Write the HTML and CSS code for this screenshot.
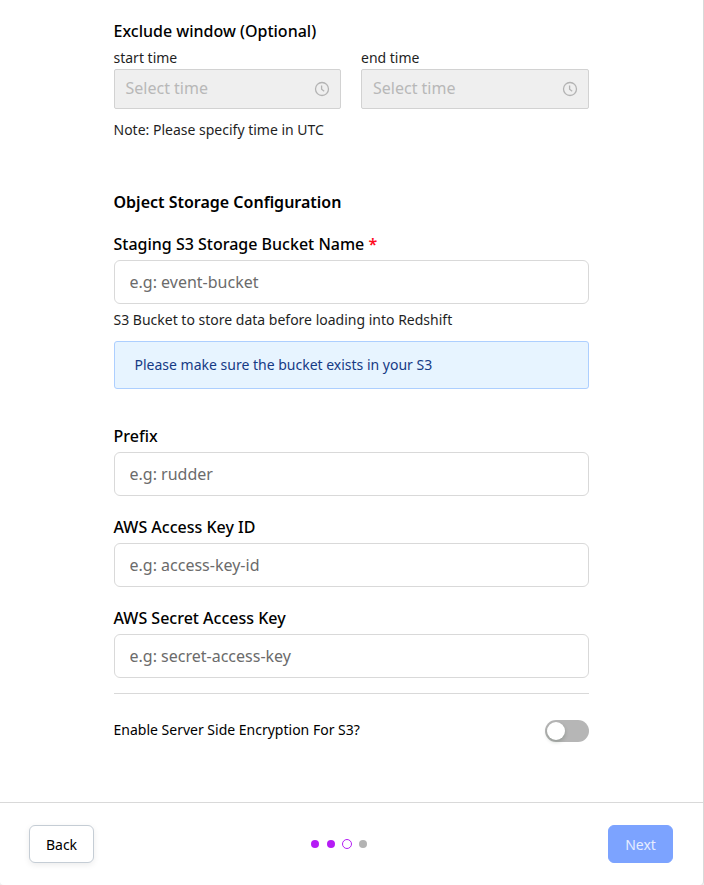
FILE: index.html
```
<!DOCTYPE html>
<html lang="en">
<head>
<meta charset="utf-8">
<title>Destination settings</title>
<link rel="stylesheet" href="styles.css">
</head>
<body>
<main class="card">
  <form class="form">
    <h2 class="label">Exclude window (Optional)</h2>
    <div class="times">
      <div class="time">
        <span class="small">start time</span>
        <div class="picker"><span>Select time</span>
          <svg class="clock" viewBox="0 0 16 16"><circle cx="8" cy="8" r="6.5"/><path d="M7.6 4.4v3.9l2.6 2"/></svg>
        </div>
      </div>
      <div class="time">
        <span class="small">end time</span>
        <div class="picker"><span>Select time</span>
          <svg class="clock" viewBox="0 0 16 16"><circle cx="8" cy="8" r="6.5"/><path d="M7.6 4.4v3.9l2.6 2"/></svg>
        </div>
      </div>
    </div>
    <p class="small note">Note: Please specify time in UTC</p>
    <h2 class="label section">Object Storage Configuration</h2>
    <div class="field">
      <label class="label" for="bucket">Staging S3 Storage Bucket Name <span class="required">*</span></label>
      <input class="input" id="bucket" placeholder="e.g: event-bucket">
      <p class="small help">S3 Bucket to store data before loading into Redshift</p>
      <div class="alert">Please make sure the bucket exists in your S3</div>
    </div>
    <div class="field prefix">
      <label class="label" for="prefix">Prefix</label>
      <input class="input" id="prefix" placeholder="e.g: rudder">
    </div>
    <div class="field">
      <label class="label" for="key">AWS Access Key ID</label>
      <input class="input" id="key" placeholder="e.g: access-key-id">
    </div>
    <div class="field">
      <label class="label" for="secret">AWS Secret Access Key</label>
      <input class="input" id="secret" placeholder="e.g: secret-access-key">
    </div>
    <div class="toggle-row">
      <span class="toggle-label">Enable Server Side Encryption For S3?</span>
      <span class="switch"><span class="knob"></span></span>
    </div>
  </form>
  <footer class="footer">
    <button class="button back">Back</button>
    <div class="steps"><i class="dot"></i><i class="dot"></i><i class="dot current"></i><i class="dot pending"></i></div>
    <button class="button next">Next</button>
  </footer>
</main>
</body>
</html>
```
FILE: styles.css
```
* { box-sizing: border-box; }
body {
  margin: 0;
  background: #f0f0f0;
  color: #000;
  font: 14px/20px "Noto Sans", sans-serif;
}
h2, p { margin: 0; }
.card {
  display: flex;
  flex-direction: column;
  height: 885px;
  background: #fff;
  border-right: 1px solid #d9d9d9;
  border-radius: 0 0 4px 4px;
  overflow: hidden;
}
.form {
  flex: 1;
  width: 475px;
  margin-left: 113.5px;
  padding-top: 20px;
}
.label {
  display: block;
  font-size: 16px;
  line-height: 22px;
  font-weight: 500;
}
.small { display: block; color: #1f1f1f; }
.times {
  display: grid;
  grid-template-columns: 1fr 1fr;
  gap: 20px;
  margin-top: 6px;
}
.picker {
  display: flex;
  align-items: center;
  justify-content: space-between;
  height: 40px;
  margin-top: 1px;
  padding: 0 10px 0 11px;
  border: 1px solid #d2d2d2;
  border-radius: 2px;
  background: #efefef;
  color: #b8b8b8;
  font-size: 16px;
}
.picker span { padding-bottom: 2px; }
.clock {
  width: 16px;
  height: 16px;
  fill: none;
  stroke: #b3b3b3;
  stroke-width: 1.3;
}
.note { margin-top: 11px; }
.section { margin: 51px 0 20px; font-weight: 600; }
.field + .field { margin-top: 20px; }
.required { color: #ff0a1e; font-weight: 600; }
.input {
  display: block;
  width: 100%;
  height: 44px;
  margin-top: 5px;
  padding: 0 15px;
  border: 1px solid #d9d9d9;
  border-radius: 6px;
  background: #fff;
  font: 16px/22px "Noto Sans", sans-serif;
}
.input::placeholder { color: #6b6b6b; }
.help { margin-top: 6px; }
.alert {
  height: 48px;
  margin-top: 11px;
  padding: 13px 20px;
  border: 1px solid #adcfff;
  border-radius: 3px;
  background: #e7f4ff;
  color: #153a85;
}
.field.prefix { margin-top: 36px; }
.toggle-row {
  display: flex;
  align-items: center;
  justify-content: space-between;
  margin-top: 15px;
  padding-top: 26px;
  border-top: 1px solid #d9d9d9;
}
.toggle-label { padding-bottom: 2px; }
.switch {
  width: 44px;
  height: 22px;
  padding: 2px;
  border-radius: 11px;
  background: #b6b6b6;
}
.knob {
  display: block;
  width: 18px;
  height: 18px;
  border-radius: 50%;
  background: #fff;
  box-shadow: 0 2px 4px rgba(0, 35, 11, .2);
}
.footer {
  display: flex;
  align-items: center;
  justify-content: space-between;
  height: 83px;
  padding: 0 30px 0 29px;
  border-top: 1px solid #d9d9d9;
}
.button {
  width: 65px;
  height: 38px;
  padding: 2px 0 0;
  border: 1px solid #c5cdd5;
  border-radius: 6px;
  background: #fff;
  color: #000;
  font: 14px/20px "Noto Sans", sans-serif;
}
.back { box-shadow: 0 2px 6px rgba(0, 0, 0, .08); }
.next {
  border-color: #7ca3ff;
  background: #7ca3ff;
  color: #e5edff;
}
.steps {
  display: flex;
  align-items: center;
  gap: 8px;
  margin-right: 24px;
}
.dot {
  width: 8px;
  height: 8px;
  border-radius: 50%;
  background: #b51cf5;
}
.current {
  width: 10px;
  height: 10px;
  margin: 0 -1px;
  border: 1px solid #b51cf5;
  background: #fff;
}
.pending { background: #b3b3b3; }
```
